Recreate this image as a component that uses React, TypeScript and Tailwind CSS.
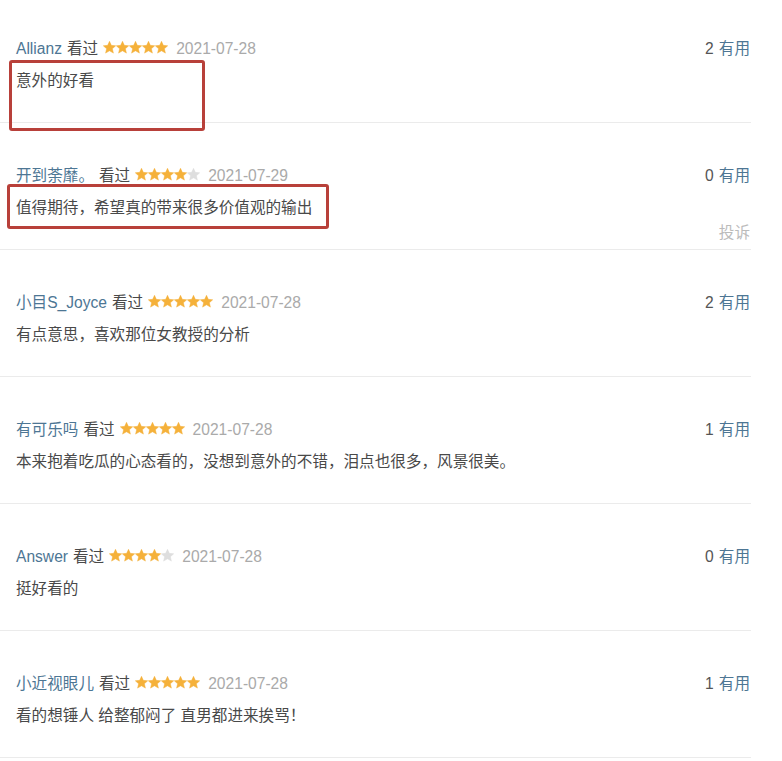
import React from "react"

type Review = {
  name: string
  stars: number
  date: string
  text: string
  votes: number
  report?: boolean
}

const reviews: Review[] = [
  { name: "Allianz", stars: 5, date: "2021-07-28", text: "意外的好看", votes: 2 },
  { name: "开到荼靡。", stars: 4, date: "2021-07-29", text: "值得期待，希望真的带来很多价值观的输出", votes: 0, report: true },
  { name: "小目S_Joyce", stars: 5, date: "2021-07-28", text: "有点意思，喜欢那位女教授的分析", votes: 2 },
  { name: "有可乐吗", stars: 5, date: "2021-07-28", text: "本来抱着吃瓜的心态看的，没想到意外的不错，泪点也很多，风景很美。", votes: 1 },
  { name: "Answer", stars: 4, date: "2021-07-28", text: "挺好看的", votes: 0 },
  { name: "小近视眼儿", stars: 5, date: "2021-07-28", text: "看的想锤人 给整郁闷了 直男都进来挨骂！", votes: 1 },
]

function Star({ on }: { on: boolean }) {
  return (
    <svg width="13" height="13" viewBox="1 1 22 22" className="shrink-0">
      <path
        d="M12 1.5l3.1 6.9 7.4.7-5.6 5 1.7 7.4L12 17.6l-6.6 3.9 1.7-7.4-5.6-5 7.4-.7z"
        fill={on ? "#f5b13a" : "#dedede"}
        stroke={on ? "#f5b13a" : "#dedede"}
        strokeWidth="0.8"
        strokeLinejoin="round"
      />
    </svg>
  )
}

function Stars({ count }: { count: number }) {
  return (
    <span className="inline-flex items-center">
      {[0, 1, 2, 3, 4].map((i) => (
        <Star key={i} on={i < count} />
      ))}
    </span>
  )
}

function Item({ r }: { r: Review }) {
  return (
    <div className="relative pl-4 pr-px pt-[42px] pb-[30px] first:pt-[38px] border-b border-[#ebebeb]">
      <div className="flex items-center justify-between h-[22px] leading-[22px]">
        <div className="flex items-center">
          <span className="text-[#4d7694]">{r.name}</span>
          <span className="text-[#494949] ml-[5px]">看过</span>
          <span className="ml-[5px] mt-[-1px]">
            <Stars count={r.stars} />
          </span>
          <span className="text-[#aaaaaa] ml-[8px]">{r.date}</span>
        </div>
        <div>
          <span className="text-[#555]">{r.votes}</span>
          <span className="text-[#4d7694] ml-[5px]">有用</span>
        </div>
      </div>
      <p className="mt-[10px] h-[22px] leading-[22px] text-[#494949]">{r.text}</p>
      {r.report && (
        <span className="absolute right-px bottom-[5px] leading-[22px] text-[#bbbbbb]">投诉</span>
      )}
    </div>
  )
}

export default function App() {
  return (
    <div
      className="relative w-[782px] h-[761px] overflow-hidden bg-white pr-[31px] text-[15.6px]"
      style={{ fontFamily: '"Liberation Sans", Arial, "Noto Sans CJK SC", sans-serif' }}
    >
      <div>
        {reviews.map((r) => (
          <Item key={r.name} r={r} />
        ))}
      </div>

      {/* annotation boxes */}
      <div className="absolute left-[9px] top-[60px] w-[196px] h-[71px] border-[3px] border-[#b8403a] rounded-[3px]" />
      <div className="absolute left-[7px] top-[184px] w-[322px] h-[45px] border-[3px] border-[#b8403a] rounded-[3px]" />
    </div>
  )
}
